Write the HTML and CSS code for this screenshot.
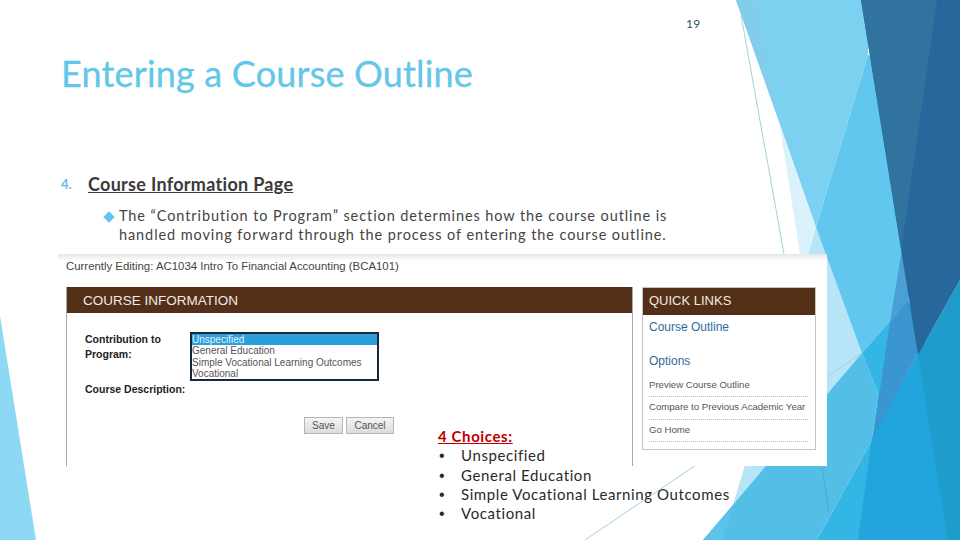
FILE: index.html
```html
<!DOCTYPE html>
<html lang="en">
<head>
<meta charset="utf-8">
<title>Entering a Course Outline</title>
<link rel="stylesheet" href="styles.css">
</head>
<body>
<main class="slide">
  <svg class="backdrop" viewBox="0 0 960 540" aria-hidden="true">
    <polygon fill="#8dd8f3" points="0,316 36,540 0,540"/>
    <polygon fill="#daf2fb" points="780,127 826,254 830,300 800,254"/>
    <polygon fill="#b7e4f6" points="868,55 862,353 733,505"/>
    <polygon fill="#62c7ee" points="868,55 920,60 920,320 890,322 862,353 816,227"/>
    <polygon fill="#7dd1f0" points="736,0 870,0 868,55 816,227"/>
    <polygon fill="#82cdec" points="736,0 755,0 778,117"/>
    <polygon fill="#53bfe6" points="862,353 878,393 872,440 817,540 703,540"/>
    <polygon fill="#5dc3e9" points="735,505 703,540 722,540"/>
    <polygon fill="#33b5e5" points="862,353 895,316 885,440 872,440 878,393"/>
    <polygon fill="#33b5e5" points="872,440 880,540 817,540"/>
    <polygon fill="#22a5dd" points="925,340 955,540 858,540 872,437"/>
    <polygon fill="#1e9ccb" points="918,355 960,280 960,540 948,540"/>
    <polygon fill="#4a9fd4" points="905,230 925,230 908,300 890,322"/>
    <polygon fill="#3a95d0" points="908,300 925,340 873,437 890,322"/>
    <polygon fill="#26689c" points="861,0 960,0 960,280 918,355"/>
    <polygon fill="#31739f" points="861,0 937,0 901.2,250"/>
    <line class="hair" x1="741" y1="15" x2="784" y2="254"/>
    <line class="hair hair-faint" x1="822" y1="467" x2="829" y2="513"/>
    <line class="hair" x1="862" y1="353" x2="585" y2="540"/>
  </svg>

  <div class="content">
    <p class="page-number">19</p>
    <h1 class="title">Entering a Course Outline</h1>
    <div class="step">
      <span class="step-number">4.</span>
      <h2 class="step-title">Course Information Page</h2>
    </div>
    <div class="point">
      <span class="diamond"></span>
      <p class="point-text">The “Contribution to Program” section determines how the course outline is handled moving forward through the process of entering the course outline.</p>
    </div>

    <section class="shot">
      <p class="editing">Currently Editing: AC1034 Intro To Financial Accounting (BCA101)</p>
      <div class="panels">
        <div class="panel-main">
          <h3 class="band band-main">COURSE INFORMATION</h3>
          <div class="form-row">
            <span class="label label-program">Contribution to Program:</span>
            <ul class="listbox">
              <li class="option option-selected">Unspecified</li>
              <li class="option">General Education</li>
              <li class="option">Simple Vocational Learning Outcomes</li>
              <li class="option">Vocational</li>
            </ul>
          </div>
          <span class="label label-description">Course Description:</span>
          <div class="buttons">
            <span class="button button-save">Save</span>
            <span class="button button-cancel">Cancel</span>
          </div>
        </div>
        <aside class="panel-links">
          <h3 class="band band-links">QUICK LINKS</h3>
          <div class="links-body">
            <p class="links-heading">Course Outline</p>
            <p class="links-heading links-options">Options</p>
            <p class="link">Preview Course Outline</p>
            <p class="link">Compare to Previous Academic Year</p>
            <p class="link">Go Home</p>
          </div>
        </aside>
      </div>
    </section>
  </div>

  <div class="choices">
    <p class="choices-title">4 Choices:</p>
    <ul class="choices-list">
      <li class="choice">Unspecified</li>
      <li class="choice">General Education</li>
      <li class="choice">Simple Vocational Learning Outcomes</li>
      <li class="choice">Vocational</li>
    </ul>
  </div>
</main>
</body>
</html>
```
FILE: styles.css
```css
* { box-sizing: border-box; margin: 0; padding: 0; }
html, body { width: 960px; height: 540px; overflow: hidden; background: #fff; }
ul { list-style: none; }

.slide {
  position: relative;
  width: 960px;
  height: 540px;
  font-family: "Lato", "Open Sans", sans-serif;
  color: #404040;
}
.backdrop { position: absolute; inset: 0; width: 960px; height: 540px; }
.hair { stroke: #a5cfdf; stroke-width: 1; }
.hair-faint { stroke: #4aa9d2; }

.content { position: relative; padding: 16px 0 0 58px; }
.page-number {
  margin-left: 628px;
  font-size: 12px;
  line-height: 16px;
  color: #2f5060;
  letter-spacing: 0.3px;
}
.title {
  margin: 17px 0 0 3px;
  font-size: 36px;
  line-height: 48px;
  font-weight: 400;
  color: #64c6e8;
  letter-spacing: 0.18px;
  -webkit-text-stroke: 0.3px #64c6e8;
}
.step { display: flex; align-items: center; margin: 74px 0 0 3px; height: 26px; }
.step-number { width: 27px; font-size: 13px; font-weight: 700; color: #62bfdf; }
.step-title {
  font-size: 18px;
  font-weight: 700;
  color: #3a3a3a;
  text-decoration: underline;
  letter-spacing: 0.3px;
}
.point { display: flex; margin: 9px 0 0 46px; }
.diamond {
  flex: none;
  width: 8px;
  height: 8px;
  margin: 7px 6px 0 1px;
  background: #5fc5ea;
  transform: rotate(45deg);
}
.point-text { width: 560px; font-size: 14.5px; line-height: 19px; letter-spacing: 0.91px; color: #444; }

.shot {
  width: 769px;
  height: 212px;
  margin-top: 10px;
  padding: 5px 0 0 8px;
  background: linear-gradient(#e6e6e6 0, #fff 7px);
  font-family: "Liberation Sans", Arial, sans-serif;
}
.editing { font-size: 11.4px; line-height: 14px; color: #444; }
.panels { display: flex; align-items: flex-start; gap: 9px; margin-top: 14px; }
.band { background: #542f17; color: #f0ebe4; font-weight: 400; }
.panel-main {
  width: 567px;
  height: 179px;
  border: solid #a8a8a8;
  border-width: 0 1px 0 1px;
}
.band-main { height: 26px; padding-left: 16px; font-size: 13.5px; line-height: 27px; }
.form-row { display: flex; margin-top: 19px; }
.label { font-size: 10.5px; font-weight: 700; line-height: 15px; color: #222; }
.label-program { width: 105px; margin: 0 0 0 18px; }
.listbox {
  width: 189px;
  height: 49px;
  border: 2px solid #16283a;
  background: #fff;
  overflow: hidden;
}
.option { height: 11.25px; font-size: 10px; line-height: 11.25px; color: #555; }
.option-selected { background: #2a9fdc; color: #e8f4fb; }
.label-description { display: block; margin: 1px 0 0 18px; }
.buttons { display: flex; gap: 3px; margin: 20px 0 0 237px; }
.button {
  height: 17px;
  border: 1px solid #b5b5b5;
  background: linear-gradient(#f4f4f4, #dcdcdc);
  font-size: 10px;
  line-height: 16px;
  text-align: center;
  color: #555;
}
.button-save { width: 39px; }
.button-cancel { width: 48px; }

.panel-links { width: 174px; height: 163px; border: 1px solid #c4c4c4; }
.band-links { height: 27px; margin: 0; padding-left: 6px; font-size: 13px; line-height: 26px; }
.links-body { padding: 5px 7px 0 6px; }
.links-heading { font-size: 12px; line-height: 15px; color: #2f6a9a; }
.links-options { margin-top: 19px; }
.link {
  height: 22.5px;
  border-bottom: 1px dotted #bbb;
  font-size: 9.6px;
  line-height: 19px;
  color: #555;
  white-space: nowrap;
}
.links-options + .link { margin-top: 5.5px; }

.choices {
  position: absolute;
  left: 438px;
  top: 427px;
  font-size: 15px;
  line-height: 19.3px;
  letter-spacing: 0.6px;
  color: #2a2a2a;
}
.choices-title { font-weight: 700; color: #c00000; text-decoration: underline; }
.choice { position: relative; padding-left: 23px; }
.choice::before {
  content: "•";
  position: absolute;
  left: 1px;
  font-family: "Liberation Sans", Arial, sans-serif;
  font-size: 16px;
}
```
